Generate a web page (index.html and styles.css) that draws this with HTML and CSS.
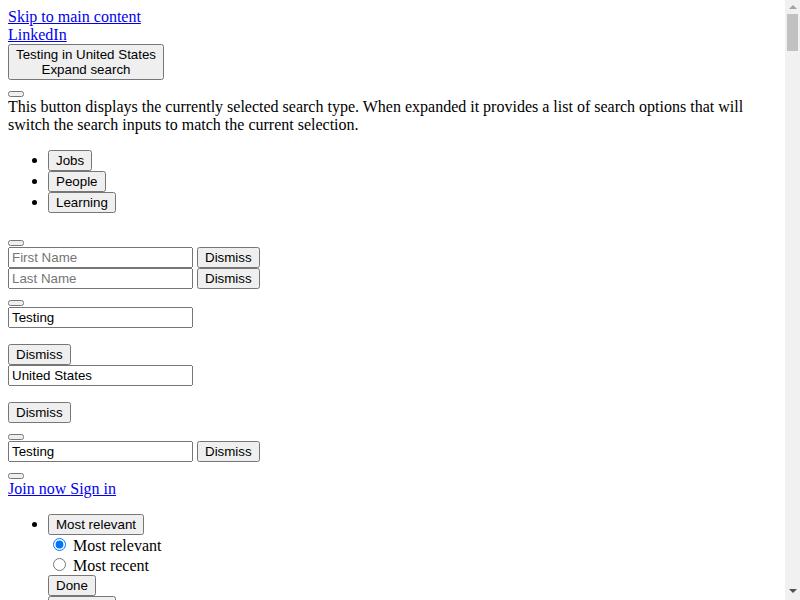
FILE: index.html
```html
<!DOCTYPE html>
<html lang="en">
<head>
<meta charset="utf-8">
<title>Testing jobs in United States</title>
<link rel="stylesheet" href="styles.css">
</head>
<body>
<a href="#main-content" class="skip-link">Skip to main content</a>
<header class="nav">
  <div><a href="#" class="nav-logo">LinkedIn</a></div>
  <button class="search-toggle" type="button"><span class="toggle-line">Testing in United States</span><span class="toggle-line">Expand search</span></button>
  <div class="search-type">
    <div class="line"><button class="icon-btn" type="button" aria-label="Jobs"></button></div>
    <div>This button displays the currently selected search type. When expanded it provides a list of search options that will switch the search inputs to match the current selection.</div>
    <ul class="type-list">
      <li><button type="button">Jobs</button></li>
      <li><button type="button">People</button></li>
      <li><button type="button">Learning</button></li>
    </ul>
  </div>
  <section class="people-search">
    <div class="line"><button class="icon-btn" type="button" aria-label="Close"></button></div>
    <div><input type="text" placeholder="First Name"> <button type="button">Dismiss</button></div>
    <div><input type="text" placeholder="Last Name"> <button type="button">Dismiss</button></div>
  </section>
  <section class="jobs-search">
    <div class="line"><button class="icon-btn" type="button" aria-label="Close"></button></div>
    <div><input type="text" value="Testing"></div>
    <ul class="typeahead-results" role="listbox"></ul>
    <div><button type="button">Dismiss</button></div>
    <div><input type="text" value="United States"></div>
    <ul class="typeahead-results" role="listbox"></ul>
    <div><button type="button">Dismiss</button></div>
  </section>
  <section class="learning-search">
    <div class="line"><button class="icon-btn" type="button" aria-label="Close"></button></div>
    <div><input type="text" value="Testing"> <button type="button">Dismiss</button></div>
    <div class="line"><button class="icon-btn" type="button" aria-label="Search"></button></div>
  </section>
  <div class="nav-cta"><a href="#">Join now </a><a href="#">Sign in</a></div>
</header>
<main id="main-content">
  <ul class="filters">
    <li>
      <button type="button">Most relevant</button>
      <div class="radio-group">
        <div><input type="radio" id="sort-relevant" name="sort" checked> <label for="sort-relevant">Most relevant</label></div>
        <div><input type="radio" id="sort-recent" name="sort"> <label for="sort-recent">Most recent</label></div>
      </div>
      <button type="button">Done</button>
    </li>
    <li>
      <button type="button">Any time</button>
      <div class="radio-group">
        <div><input type="radio" id="t-any" name="time" checked> <label for="t-any">Any time</label></div>
        <div><input type="radio" id="t-month" name="time"> <label for="t-month">Past month</label></div>
        <div><input type="radio" id="t-week" name="time"> <label for="t-week">Past week</label></div>
        <div><input type="radio" id="t-day" name="time"> <label for="t-day">Past 24 hours</label></div>
      </div>
      <button type="button">Done</button>
    </li>
    <li>
      <button type="button">Company</button>
      <button type="button">Done</button>
    </li>
    <li>
      <button type="button">Job type</button>
      <button type="button">Done</button>
    </li>
    <li>
      <button type="button">Experience level</button>
      <button type="button">Done</button>
    </li>
  </ul>
  <section class="results">
    <h1>Testing Jobs in United States</h1>
    <ul>
      <li><a href="#">Software Test Engineer</a></li>
      <li><a href="#">QA Tester</a></li>
      <li><a href="#">Quality Assurance Analyst</a></li>
      <li><a href="#">Test Automation Engineer</a></li>
    </ul>
  </section>
</main>
<div class="scrollbar" aria-hidden="true">
  <span class="sb-up"></span>
  <span class="sb-thumb"></span>
  <span class="sb-fill"></span>
  <span class="sb-down"></span>
</div>
</body>
</html>
```
FILE: styles.css
```css
html {
  background: #ffffff;
}

body {
  margin: 8px 23px 8px 8px;
  font-family: "Liberation Serif", "Times New Roman", serif;
  font-size: 16px;
  color: #000000;
}

button,
input {
  font-family: "Liberation Sans", Arial, sans-serif;
  font-size: 13.3333px;
}

.toggle-line {
  display: block;
}

.line {
  min-height: 18px;
}

.type-list,
.filters {
  margin: 16px 0;
  padding-left: 40px;
}

.results {
  min-height: 8200px;
}

/* emulated browser scrollbar */
.scrollbar {
  position: fixed;
  top: 0;
  right: 0;
  width: 15px;
  height: 100vh;
  background: #f1f1f1;
  display: flex;
  flex-direction: column;
  align-items: center;
}

.sb-up {
  margin-top: 5px;
  width: 0;
  height: 0;
  border-left: 4px solid transparent;
  border-right: 4px solid transparent;
  border-bottom: 4px solid #a3a3a3;
}

.sb-thumb {
  margin-top: 5px;
  width: 11px;
  height: 37px;
  background: #c1c1c1;
}

.sb-fill {
  flex: 1;
}

.sb-down {
  margin-bottom: 7px;
  width: 0;
  height: 0;
  border-left: 4px solid transparent;
  border-right: 4px solid transparent;
  border-top: 4px solid #505050;
}
```
